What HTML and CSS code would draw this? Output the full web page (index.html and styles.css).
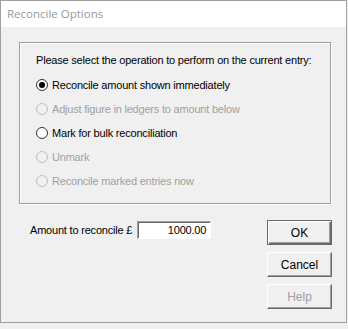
FILE: index.html
```html
<!DOCTYPE html>
<html>

<head>
  <title>Reconcile Options</title>
  <link rel="stylesheet" href="styles.css">
</head>

<body>
  <div class="window">
    <div class="titlebar">Reconcile Options</div>

    <div class="client">
      <div class="group">
        <p class="prompt">Please select the operation to perform on the current entry:</p>
        <div class="option"><span class="radio checked"></span>Reconcile amount shown immediately</div>
        <div class="option disabled"><span class="radio"></span>Adjust figure in ledgers to amount below</div>
        <div class="option"><span class="radio"></span>Mark for bulk reconciliation</div>
        <div class="option disabled"><span class="radio"></span>Unmark</div>
        <div class="option disabled"><span class="radio"></span>Reconcile marked entries now</div>
      </div>

      <div class="lower">
        <div class="amount">
          <span class="amount-label">Amount to reconcile £</span>
          <span class="field">1000.00</span>
        </div>
        <div class="buttons">
          <button type="button" class="btn default">OK</button>
          <button type="button" class="btn">Cancel</button>
          <button type="button" class="btn" disabled>Help</button>
        </div>
      </div>
    </div>
  </div>
</body>

</html>
```

FILE: styles.css
```css
body {
  margin: 0;
  background-color: #f0f0f0;
  font-family: 'Liberation Sans', Arial, sans-serif;
  font-size: 11px;
  letter-spacing: -0.2px;
  color: #000;
}

.window {
  width: 347px;
  height: 323px;
  box-sizing: border-box;
  border: 1px solid #a0a0a0;
  background-color: #f0f0f0;
}

.titlebar {
  height: 26px;
  background-color: #fff;
  color: #999;
  font-family: 'Open Sans', sans-serif;
  font-size: 11.5px;
  letter-spacing: 0;
  line-height: 26px;
  padding-left: 6px;
}

.client {
  padding: 15px 0 0 18px;
}

.group {
  width: 312px;
  height: 162px;
  box-sizing: border-box;
  border: 1px solid #a0a0a0;
  box-shadow: inset 1px 1px #fff, 1px 1px #fff;
  padding: 11px 0 0 16px;
}

.prompt {
  margin: 0 0 6px 0;
  line-height: 13px;
}

.option {
  display: flex;
  align-items: center;
  height: 24px;
}

.option.disabled {
  color: #a0a0a0;
}

.radio {
  width: 12px;
  height: 12px;
  box-sizing: border-box;
  border: 1px solid #333;
  border-radius: 50%;
  background-color: #fff;
  margin-right: 4px;
  display: flex;
  align-items: center;
  justify-content: center;
}

.option.disabled .radio {
  border-color: #bcbcbc;
  background-color: #f0f0f0;
}

.radio.checked::after {
  content: "";
  width: 6px;
  height: 6px;
  border-radius: 50%;
  background-color: #000;
}

.lower {
  display: flex;
  justify-content: space-between;
  padding: 16px 14px 0 11px;
}

.amount {
  display: flex;
  align-items: center;
  height: 18px;
  margin-top: 1px;
}

.amount-label {
  margin-right: 5px;
}

.field {
  width: 74px;
  height: 18px;
  box-sizing: border-box;
  background-color: #fff;
  border-top: 1px solid #a0a0a0;
  border-left: 1px solid #a0a0a0;
  border-right: 1px solid #fff;
  border-bottom: 1px solid #fff;
  box-shadow: inset 1px 1px #696969;
  text-align: right;
  padding-right: 4px;
  line-height: 16px;
}

.buttons {
  display: flex;
  flex-direction: column;
  gap: 7px;
}

.btn {
  width: 65px;
  height: 25px;
  box-sizing: border-box;
  background-color: #f0f0f0;
  font-family: 'Liberation Sans', Arial, sans-serif;
  font-size: 12px;
  color: #000;
  border-top: 1px solid #fff;
  border-left: 1px solid #fff;
  border-right: 1px solid #696969;
  border-bottom: 1px solid #696969;
  box-shadow: inset -1px -1px #a0a0a0;
  padding: 0;
}

.btn.default {
  border: 1px solid #696969;
  box-shadow: inset 1px 1px #fff, inset -1px -1px #696969, inset -2px -2px #a0a0a0;
}

.btn:disabled {
  color: #a0a0a0;
}
```
